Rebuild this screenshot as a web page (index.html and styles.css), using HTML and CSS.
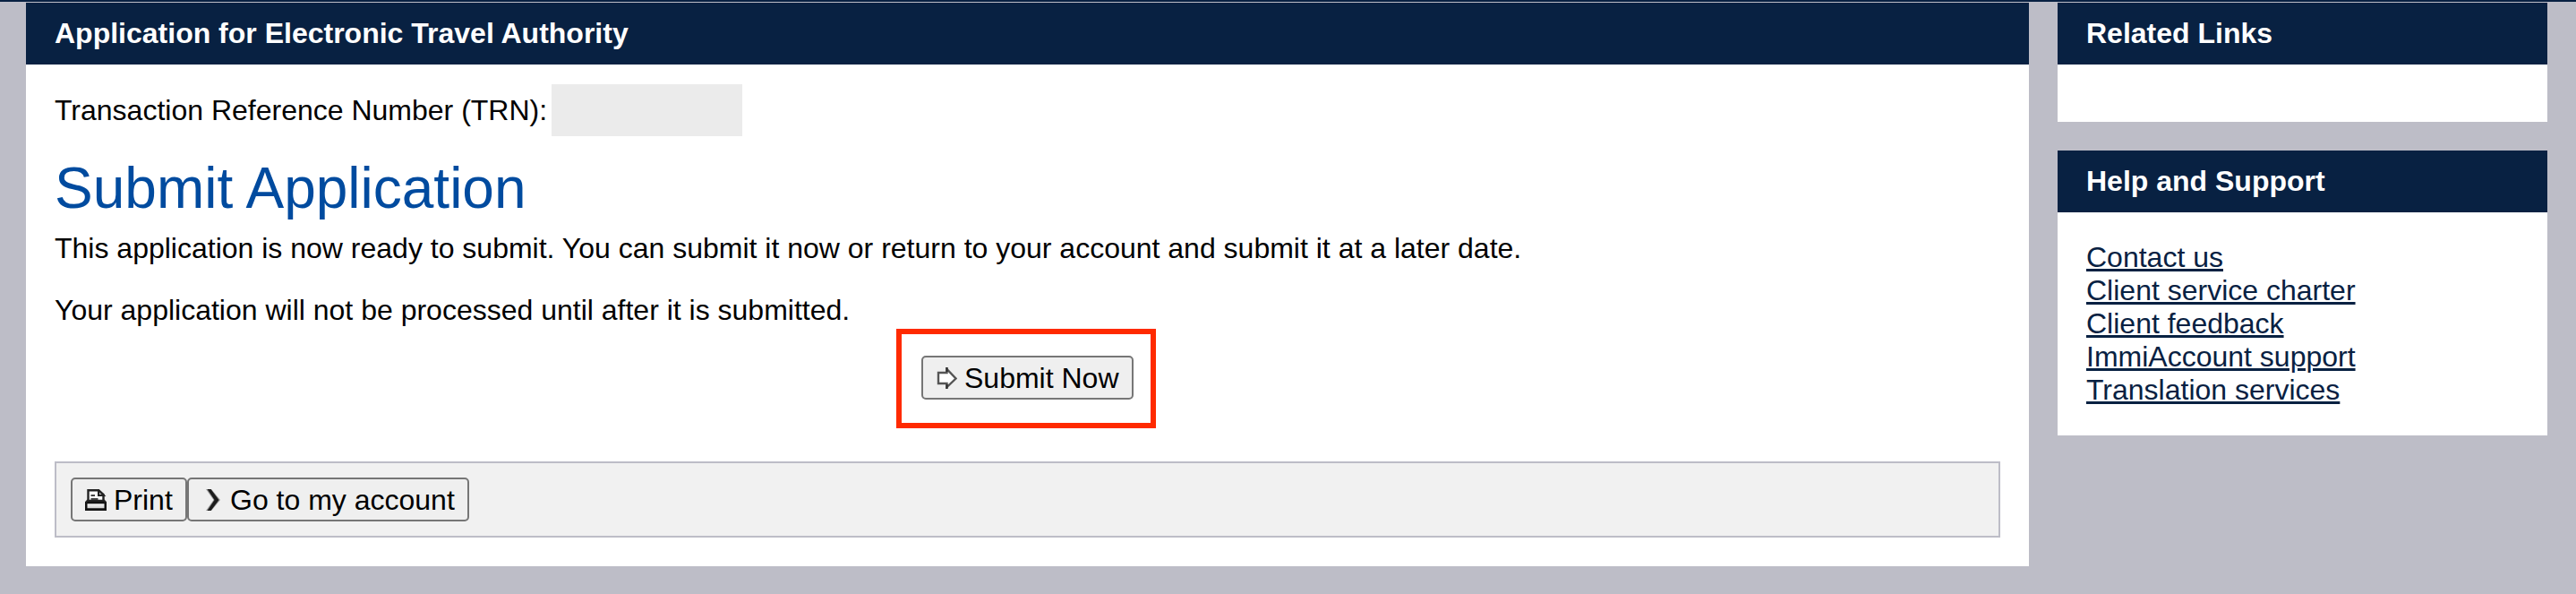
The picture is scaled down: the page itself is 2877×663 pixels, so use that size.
FILE: index.html
```html
<!DOCTYPE html>
<html lang="en">
<head>
<meta charset="utf-8">
<title>Application for Electronic Travel Authority</title>
<link rel="stylesheet" href="styles.css">
</head>
<body>
<div class="topbar"></div>
<div class="page">
  <main class="panel main">
    <h2 class="panel-title">Application for Electronic Travel Authority</h2>
    <div class="main-body">
      <div class="trn"><span class="trn-label">Transaction Reference Number (TRN):</span><span class="trn-value"></span></div>
      <h1 class="heading">Submit Application</h1>
      <p class="text">This application is now ready to submit. You can submit it now or return to your account and submit it at a later date.</p>
      <p class="text">Your application will not be processed until after it is submitted.</p>
      <div class="highlight">
        <button class="btn btn-submit" type="button">
          <svg class="icon" viewBox="0 0 24 24"><path d="M3 6H12.500V2L22.500 12.500L12.500 22V18H3Z" fill="#fff" stroke="#555" stroke-width="2.400"/><path d="M12.500 5V0M12.500 19V24" stroke="#333" stroke-width="2.400"/></svg>
          <span>Submit Now</span>
        </button>
      </div>
      <div class="toolbar">
        <button class="btn btn-print" type="button">
          <svg class="icon" viewBox="0 0 24 24">
            <defs><linearGradient id="tray" x1="0" y1="0" x2="0" y2="1"><stop offset="0" stop-color="#fff"/><stop offset="1" stop-color="#c4c4c4"/></linearGradient></defs>
            <path d="M3.500 13V1.200H15L20.500 6V13Z" fill="#fff" stroke="#222" stroke-width="2.400"/>
            <path d="M15 1V7H21Z" fill="#bbb" stroke="#222" stroke-width="2"/>
            <path d="M6.500 7H11M6.500 11H14.500" stroke="#444" stroke-width="2"/>
            <path d="M1.200 22.600V15H22.800V22.600Z" fill="url(#tray)" stroke="#111" stroke-width="2.600"/>
            <path d="M3 12L1 15M21 12L23 15" stroke="#222" stroke-width="2"/>
          </svg>
          <span>Print</span>
        </button>
        <button class="btn btn-account" type="button">
          <svg class="icon" viewBox="0 0 24 24"><path d="M5 0H11L21 12L11 24H5L13.500 12Z" fill="#999"/><path d="M6.500 0H10.500L19.500 12L10.500 24H6.500L14.500 12Z" fill="#1c1c1c"/></svg>
          <span>Go to my account</span>
        </button>
      </div>
    </div>
  </main>
  <aside class="side">
    <section class="panel">
      <h2 class="panel-title">Related Links</h2>
      <div class="side-body"></div>
    </section>
    <section class="panel">
      <h2 class="panel-title">Help and Support</h2>
      <div class="side-body links">
        <a href="#">Contact us</a>
        <a href="#">Client service charter</a>
        <a href="#">Client feedback</a>
        <a href="#">ImmiAccount support</a>
        <a href="#">Translation services</a>
      </div>
    </section>
  </aside>
</div>
</body>
</html>
```

FILE: styles.css
```css
* { box-sizing: border-box; }
body {
  margin: 0;
  background: #bdbdc7;
  color: #000;
  font: 32px/37px "Liberation Sans", Arial, Helvetica, sans-serif;
}
.topbar { height: 2px; background: #082142; }
.page {
  display: flex;
  align-items: flex-start;
  gap: 32px;
  padding: 1px 32px 0 29px;
}
.panel { background: #fff; }
.main { width: 2237px; }
.panel-title {
  margin: 0;
  padding: 16px 32px;
  background: #082142;
  color: #fff;
  font-size: 32px;
  font-weight: bold;
  line-height: 37px;
}
.main-body { padding: 22px 32px 32px; }
.trn { display: flex; align-items: center; height: 58px; }
.trn-label { width: 555px; white-space: nowrap; }
.trn-value { width: 213px; height: 58px; background: #ebebeb; }
.heading {
  margin: 21px 0 12px;
  color: #004b9f;
  font-size: 64px;
  font-weight: normal;
  line-height: 74px;
}
.text { margin: 0 0 32px; }
.highlight {
  width: 290px;
  height: 111px;
  margin: -30px 0 37px 940px;
  padding: 24px 22px;
  border: 6px solid #ff2a00;
}
.btn {
  display: flex;
  align-items: center;
  height: 49px;
  padding: 1px 0 0 14px;
  gap: 8px;
  border: 2px solid #767676;
  border-radius: 5px;
  background: #efefef;
  color: #000;
  font: inherit;
  white-space: nowrap;
}
.icon { width: 24px; height: 24px; flex: none; }
.btn-submit { width: 237px; }
.btn-print { width: 130px; }
.btn-account { width: 315px; }
.toolbar {
  display: flex;
  width: 2173px;
  height: 85px;
  padding: 16px;
  border: 2px solid #bdbdc7;
  background: #f1f1f1;
}
.side {
  display: flex;
  flex-direction: column;
  gap: 32px;
  width: 547px;
}
.side-body { padding: 32px; }
.links { display: flex; flex-direction: column; align-items: flex-start; }
.links a {
  color: #082142;
  text-decoration-thickness: 3px;
  text-underline-offset: 2px;
}
```
